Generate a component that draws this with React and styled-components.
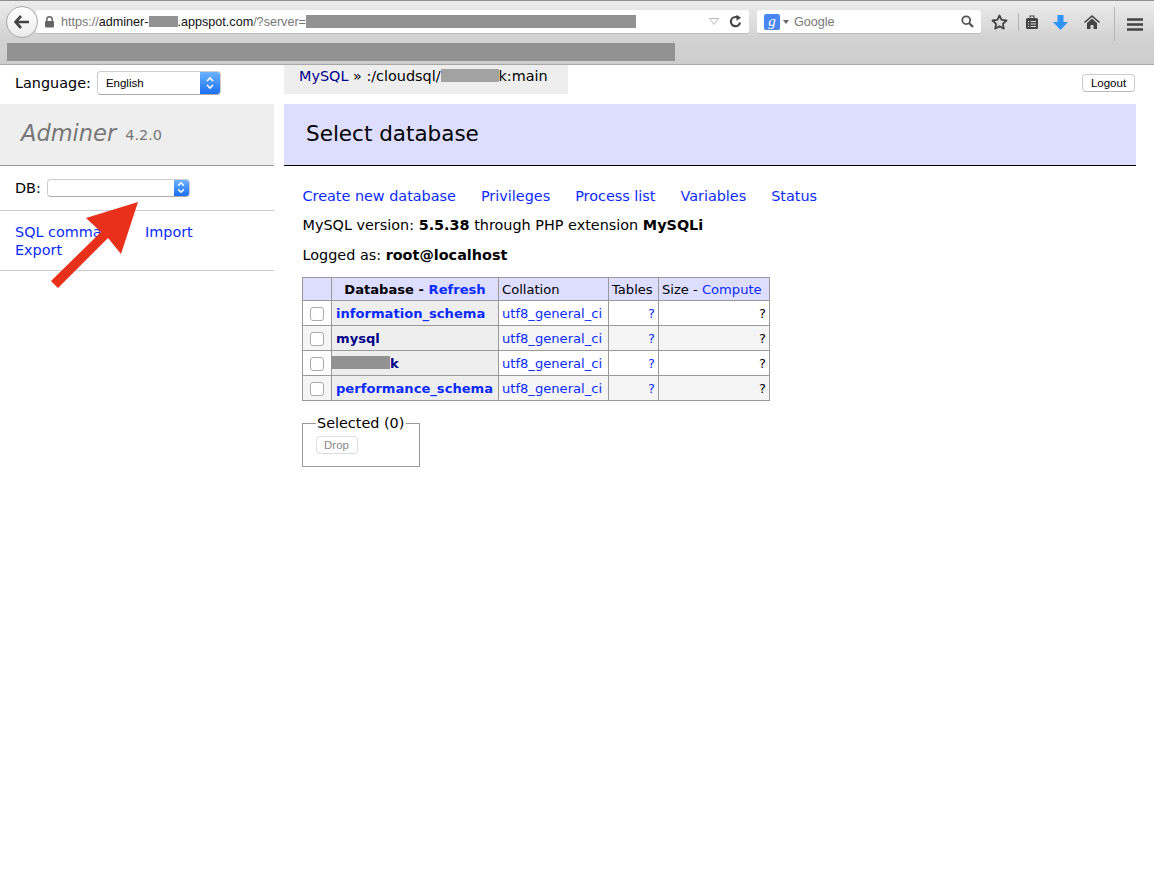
import React from "react";
import styled, { createGlobalStyle } from "styled-components";

const Global = createGlobalStyle`
  html, body { margin: 0; padding: 0; background: #fff; }
  body { font-family: "DejaVu Sans", Verdana, sans-serif; font-size: 14.4px; color: #000; }
  a { color: #0a2bff; text-decoration: none; }
`;
const Page = styled.div`width:1154px;height:895px;position:relative;overflow:hidden;background:#fff;`;
const Chrome = styled.header`
  height:65px;box-sizing:border-box;border-bottom:1px solid #a8a8a8;border-top:1px solid #8f8f8f;
  background:linear-gradient(#ececec,#d2d2d2 60%,#cdcdcd);padding-top:7px;
`;
const NavRow = styled.div`display:flex;align-items:center;height:28px;padding-left:6px;`;
const BackButton = styled.div`
  width:32px;height:32px;border-radius:50%;background:linear-gradient(#fff,#ececec);border:1px solid #a9a9a9;box-sizing:border-box;
  display:flex;align-items:center;justify-content:center;position:relative;z-index:1;flex:none;margin-top:-1px;
`;
const UrlBar = styled.div`
  width:714px;height:24px;margin-left:-2px;background:#fff;border-radius:0 3px 3px 0;box-sizing:border-box;border-bottom:1px solid #bbb;
  display:flex;align-items:center;padding-left:8px;font-family:"Liberation Sans",Arial,sans-serif;font-size:12.6px;color:#111;
`;
const Grey = styled.span`color:#777;`;
const Redact = styled.span`
  display:inline-block;background:#929292;height:${p=>p.$h||12}px;width:${p=>p.$w}px;vertical-align:middle;flex:none;
`;
const UrlEnd = styled.div`margin-left:auto;display:flex;align-items:center;gap:10px;padding-right:7px;`;
const SearchBar = styled.div`
  width:224px;height:24px;margin-left:8px;background:#fff;border-radius:3px;box-sizing:border-box;border-bottom:1px solid #bbb;flex:none;
  display:flex;align-items:center;padding:0 7px 0 7px;font-family:"Liberation Sans",Arial,sans-serif;font-size:12.6px;color:#777;
`;
const GBadge = styled.span`
  width:16px;height:16px;background:#4a86f0;color:#fff;border-radius:2px;font-family:"Liberation Serif",serif;font-style:italic;font-size:15px;
  display:flex;align-items:center;justify-content:center;line-height:1;
`;
const Caret = styled.span`width:0;height:0;border:3.5px solid transparent;border-top:4px solid #666;border-bottom:0;margin:0 5px 0 3px;`;
const Tools = styled.div`display:flex;align-items:center;flex:none;`;
const ToolSlot = styled.div`
  width:${p=>p.$w||30}px;height:${p=>p.$h||24}px;display:flex;align-items:center;justify-content:center;
  ${p=>p.$line?`border-left:1px solid #b4b4b4;`:""}
`;
const MenuSlot = styled.div`
  width:40px;height:34px;border-left:1px solid #b4b4b4;margin-left:6px;display:flex;align-items:center;justify-content:center;margin-top:4px;box-sizing:border-box;
`;
const BookRow = styled.div`padding:7px 0 0 7px;display:flex;`;

const Layout = styled.div`display:flex;height:830px;`;
const Sidebar = styled.aside`width:274px;flex:none;margin-right:10px;`;
const LangRow = styled.div`height:39px;display:flex;align-items:center;padding:0 0 3px 15px;box-sizing:border-box;gap:6px;`;
const Select = styled.div`
  width:${p=>p.$w}px;height:${p=>p.$h}px;border:1px solid #ccc;border-bottom-color:#aaa;border-radius:4px;box-sizing:border-box;background:#fff;
  display:flex;align-items:center;justify-content:space-between;font-family:"Liberation Sans",Arial,sans-serif;font-size:11.5px;padding-left:8px;overflow:hidden;
`;
const SelectArrow = styled.span`
  width:${p=>p.$w}px;height:100%;background:linear-gradient(#6cb3fd,#1a6ff0);display:flex;align-items:center;justify-content:center;flex:none;
`;
const Logo = styled.div`
  height:62px;box-sizing:border-box;background:#eee;border-bottom:1px solid #999;padding:0 0 4px 21px;display:flex;align-items:center;gap:9px;
`;
const LogoName = styled.em`font-size:22.5px;color:#777;`;
const LogoVersion = styled.span`font-size:14.5px;color:#777;margin-top:4px;`;
const DbRow = styled.div`height:45px;box-sizing:border-box;border-bottom:1px solid #ccc;display:flex;align-items:center;padding:0 0 1px 15px;gap:6px;`;
const SideLinks = styled.div`
  height:60px;box-sizing:border-box;border-bottom:1px solid #ccc;padding:12px 0 0 15px;line-height:18px;
`;
const SideLine = styled.div`display:flex;`;
const SideLink = styled.a`width:${p=>p.$w?p.$w+"px":"auto"};white-space:nowrap;`;

const Main = styled.main`width:852px;flex:none;`;
const TopBar = styled.div`display:flex;justify-content:space-between;height:39px;`;
const Crumb = styled.div`
  height:29px;box-sizing:border-box;background:#eee;padding:3px 15px 0 15px;width:284px;white-space:nowrap;
`;
const CrumbLink = styled.a`color:#00008b;`;
const Redacted = styled.span`color:#999;display:inline-block;width:58px;height:13px;background:#a2a2a2;vertical-align:-1px;`;
const LogoutBtn = styled.div`
  width:53px;height:18px;margin:9px 1px 0 0;box-sizing:border-box;border:1px solid #ccc;border-bottom-color:#bbb;border-radius:4px;background:#fff;
  font-family:"Liberation Sans",Arial,sans-serif;font-size:11.5px;display:flex;align-items:center;justify-content:center;
`;
const Heading = styled.h2`
  margin:0;height:62px;box-sizing:border-box;background:#ddf;border-bottom:1px solid #000;font-size:21.5px;font-weight:400;padding:16px 0 0 22px;line-height:28px;
`;
const Content = styled.div`padding-left:18.5px;`;
const LinkRow = styled.p`margin:21px 0 0;display:flex;gap:25px;line-height:18px;`;
const TextRow = styled.p`margin:${p=>p.$m}px 0 0;line-height:18px;`;
const Table = styled.table`
  border-collapse:collapse;margin:13px 0 0 -.5px;font-size:13.1px;table-layout:fixed;width:467px;
  td,th{border:1px solid #999;padding:0 3px;box-sizing:border-box;white-space:nowrap;font-weight:400;}
`;
const HeadRow = styled.tr`height:23px;background:#ddf;`;
const Row = styled.tr`height:25px;background:${p=>p.$alt?"#f5f5f5":"#fff"};`;
const NameHead = styled.th`&&{font-weight:700;text-align:center;}`;
const NameCell = styled.td`&&{background:#eee;font-weight:700;padding-left:4px;}`;
const CheckCell = styled.td`&&{padding:0;text-align:center;}`;
const Check = styled.span`
  display:inline-block;width:12px;height:12px;border:1px solid #aaa;border-radius:3px;background:#fff;vertical-align:middle;
`;
const Num = styled.td`text-align:right;`;
const NumLink = styled.a``;
const DarkLink = styled.a`color:#00008b;`;
const BoldRedact = styled.span`display:inline-block;width:59px;height:13px;background:#929292;margin-left:-5px;vertical-align:-1px;`;
const Field = styled.fieldset`
  margin:13px 0 0 -.5px;padding:4px 12.5px 10px;width:118px;height:53px;box-sizing:border-box;border:1px solid #999;min-width:0;
  legend{padding:0 1.5px;margin-left:0;font-size:14.4px;line-height:18px;}
`;
const Drop = styled.div`
  width:42px;height:18px;box-sizing:border-box;border:1px solid #ddd;border-radius:4px;color:#888;background:#fff;
  font-family:"Liberation Sans",Arial,sans-serif;font-size:11.5px;display:flex;align-items:center;justify-content:center;
`;
const ArrowOverlay = styled.svg`position:absolute;left:48px;top:197px;`;

const UpDown = ({ c = 12 }) => (
  <svg width="10" height={c + 4} viewBox="0 0 10 16" fill="none" stroke="#fff" strokeWidth="1.6">
    <path d="M2 6l3-3 3 3M2 10l3 3 3-3" />
  </svg>
);

const rows = [
  { name: "information_schema", link: true },
  { name: "mysql", alt: true },
  { name: "k", redact: true },
  { name: "performance_schema", link: true, alt: true },
];

export default function App() {
  return (
    <Page>
      <Global />
      <Chrome>
        <NavRow>
          <BackButton>
            <svg width="16" height="14" viewBox="0 0 16 14"><path d="M7 1L1.5 7 7 13M2 7h13" fill="none" stroke="#444" strokeWidth="2.6" /></svg>
          </BackButton>
          <UrlBar>
            <svg width="11" height="12" viewBox="0 0 11 12" style={{ marginRight: 6 }}><path d="M2.8 5V3.5a2.7 2.7 0 015.4 0V5" fill="none" stroke="#666" strokeWidth="1.5" /><rect x="1" y="5" width="9" height="6.5" rx="1" fill="#666" /></svg>
            <Grey>https://</Grey>adminer-<Redact $w={29} $h={11} />.appspot.com<Grey>/?server=</Grey><Redact $w={330} $h={13} />
            <UrlEnd>
              <svg width="10" height="7" viewBox="0 0 10 7"><path d="M.5.5h9L5 6.5z" fill="none" stroke="#bbb" /></svg>
              <svg width="13" height="13" viewBox="0 0 13 13"><path d="M11 7.5A4.6 4.6 0 116.5 2H8" fill="none" stroke="#444" strokeWidth="2.2" /><path d="M7.5 0l4.5 3-4.5 3z" transform="translate(0 -.2)" fill="#444" /></svg>
            </UrlEnd>
          </UrlBar>
          <SearchBar>
            <GBadge>g</GBadge><Caret />Google
            <UrlEnd style={{ paddingRight: 0 }}>
              <svg width="13" height="13" viewBox="0 0 13 13"><circle cx="5.2" cy="5.2" r="3.9" fill="none" stroke="#555" strokeWidth="1.8" /><path d="M8 8l4 4" stroke="#555" strokeWidth="2.4" /></svg>
            </UrlEnd>
          </SearchBar>
          <Tools>
            <ToolSlot $w={37}>
              <svg width="17" height="16" viewBox="0 0 17 16"><path d="M8.5 1.5l2.1 4.4 4.9.6-3.6 3.3.9 4.8-4.3-2.4-4.3 2.4.9-4.8L1.5 6.5l4.9-.6z" fill="none" stroke="#444" strokeWidth="1.8" strokeLinejoin="round" /></svg>
            </ToolSlot>
            <ToolSlot $w={25} $h={18} $line>
              <svg width="14" height="15" viewBox="0 0 14 15"><rect x="1" y="3" width="12" height="11" rx="1.5" fill="#444" /><rect x="5" y="1" width="4" height="3" fill="none" stroke="#444" /><path d="M3 6.5h1M3 9h1M3 11.5h1M5.5 6.5h5.5M5.5 9h5.5M5.5 11.5h5.5" stroke="#ddd" /></svg>
            </ToolSlot>
            <ToolSlot $w={32}>
              <svg width="15" height="15" viewBox="0 0 15 15"><path d="M4.5 0h6v7H15l-7.500 8L0 7h4.500z" fill="#2f93f7" /></svg>
            </ToolSlot>
            <ToolSlot $w={32}>
              <svg width="16" height="14" viewBox="0 0 16 14"><path d="M8 0l8 7-1 1-7-6-7 6-1-1z M3 8l5-4.500L13 8v6H9.500v-4h-3v4H3z" fill="#444" /></svg>
            </ToolSlot>
            <MenuSlot>
              <svg width="16" height="13" viewBox="0 0 16 13"><path d="M0 1.500h16M0 6.500h16M0 11.500h16" stroke="#444" strokeWidth="2.6" /></svg>
            </MenuSlot>
          </Tools>
        </NavRow>
        <BookRow><Redact $w={668} $h={18} /></BookRow>
      </Chrome>
      <Layout>
        <Sidebar>
          <LangRow>
            Language:
            <Select $w={124} $h={24}>English<SelectArrow $w={20}><UpDown c={14} /></SelectArrow></Select>
          </LangRow>
          <Logo><LogoName>Adminer</LogoName><LogoVersion>4.2.0</LogoVersion></Logo>
          <DbRow>
            DB:
            <Select $w={143} $h={18}><span /><SelectArrow $w={15}><UpDown c={11} /></SelectArrow></Select>
          </DbRow>
          <SideLinks>
            <SideLine><SideLink $w={130}>SQL command</SideLink><SideLink>Import</SideLink></SideLine>
            <SideLine><SideLink>Export</SideLink></SideLine>
          </SideLinks>
        </Sidebar>
        <Main>
          <TopBar>
            <Crumb><CrumbLink>MySQL</CrumbLink> » :/cloudsql/<Redacted />k:main</Crumb>
            <LogoutBtn>Logout</LogoutBtn>
          </TopBar>
          <Heading>Select database</Heading>
          <Content>
            <LinkRow>
              <a>Create new database</a><a>Privileges</a><a>Process list</a><a>Variables</a><a>Status</a>
            </LinkRow>
            <TextRow $m={11}>MySQL version: <b>5.5.38</b> through PHP extension <b>MySQLi</b></TextRow>
            <TextRow $m={12}>Logged as: <b>root@localhost</b></TextRow>
            <Table>
              <colgroup><col width="29" /><col width="167" /><col width="110" /><col width="50" /><col width="111" /></colgroup>
              <thead>
                <HeadRow>
                  <td />
                  <NameHead>Database - <a>Refresh</a></NameHead>
                  <td>Collation</td>
                  <td>Tables</td>
                  <td>Size - <a>Compute</a></td>
                </HeadRow>
              </thead>
              <tbody>
                {rows.map(r => (
                  <Row key={r.name} $alt={r.alt}>
                    <CheckCell><Check /></CheckCell>
                    <NameCell>
                      {r.redact && <BoldRedact />}
                      {r.link ? <a>{r.name}</a> : <DarkLink>{r.name}</DarkLink>}
                    </NameCell>
                    <td><a>utf8_general_ci</a></td>
                    <Num><NumLink>?</NumLink></Num>
                    <Num>?</Num>
                  </Row>
                ))}
              </tbody>
            </Table>
            <Field>
              <legend>Selected (0)</legend>
              <Drop>Drop</Drop>
            </Field>
          </Content>
        </Main>
      </Layout>
      <ArrowOverlay width="100" height="94" viewBox="0 0 100 94">
        <path d="M90 5L73 57 60 41 10 91 3 84 53 35 38 21z" fill="#e8301a" />
      </ArrowOverlay>
    </Page>
  );
}
